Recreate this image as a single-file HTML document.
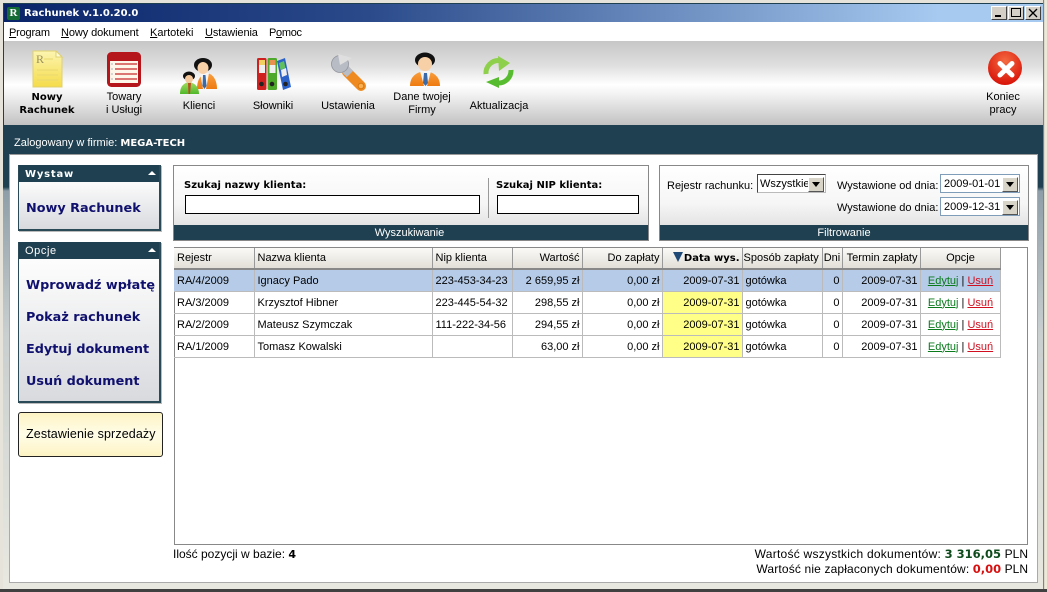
<!DOCTYPE html>
<html><head><meta charset="utf-8"><style>
html,body{margin:0;padding:0}
body{width:1047px;height:592px;position:relative;overflow:hidden;background:#e6e4da;font:11px "Liberation Sans",sans-serif;color:#000}
.a{position:absolute;white-space:nowrap}
.c{text-align:center;transform:translateX(-50%)}
.b{font-family:"DejaVu Sans",sans-serif;font-weight:bold}
.box{position:absolute;box-sizing:border-box}
.nav{position:absolute;left:26px;font:bold 12.8px "DejaVu Sans",sans-serif;color:#10106e;white-space:nowrap}
.inp{position:absolute;box-sizing:border-box;background:#fff;border:1px solid #000}
.combo{position:absolute;box-sizing:border-box;background:#fff;border:1px solid #7f9db9;height:19px;width:80px;font-size:11px;line-height:18px;padding-left:3px}
.arr{position:absolute;right:1px;top:2px;width:16px;height:15px;background:#d8d4c8;border:1px solid;border-color:#fff #555 #555 #fff;box-sizing:border-box}
.arr:after{content:"";position:absolute;left:3px;top:4px;border:4px solid transparent;border-top:5px solid #000;border-bottom:0}
table{position:absolute;left:174px;top:248px;border-collapse:collapse;table-layout:fixed;width:826px}
th{height:21px;padding:0 2px 0 3px;font-weight:normal;text-align:left;background:linear-gradient(#fbfaf7,#e2dfd8);border-right:1px solid #999;border-bottom:2px solid #888;white-space:nowrap;overflow:hidden;box-sizing:border-box}
td{height:22px;padding:1px 2px 0 3px;border-right:1px solid #bbb;border-bottom:1px solid #bbb;white-space:nowrap;overflow:hidden;box-sizing:border-box}
.r{text-align:right}
tr.s td{background:#b5cbe8}
td.y{background:#ffff88}
a{text-decoration:underline}
.g{color:#0a7a1c}.d{color:#d01020}
.ft{position:absolute;left:0;right:0;bottom:0;height:15px;background:#1f4050;color:#fff;text-align:center;line-height:16px}
.hd{position:absolute;left:0;right:0;top:0;height:17px;background:#1f4050;color:#fff}
.tri{position:absolute;right:3px;top:6px;border:4px solid transparent;border-bottom:4px solid #fff;border-top:0}
</style></head><body>
<!-- window frame -->
<div class="box" style="left:3px;top:3px;width:1040px;height:587px;background:linear-gradient(#1f4050 0,#1f4050 184px,#8e9ea8 188px,#c9cfcf 330px,#e8e8e0 580px)"></div>
<div class="box" style="left:1043px;top:0;width:4px;height:592px;background:linear-gradient(90deg,#555,#ece9d8 40%,#ece9d8)"></div>
<div class="box" style="left:0;top:589px;width:1047px;height:3px;background:#404040"></div>
<!-- title -->
<div class="box" style="left:4px;top:4px;width:1039px;height:18px;background:linear-gradient(90deg,#0a246a,#2a4a8a 35%,#a6caf0 90%)"></div>
<div class="box" style="left:7px;top:7px;width:13px;height:13px;background:#146b33;border-radius:2px;color:#fff;font:bold 11px 'Liberation Serif',serif;text-align:center;line-height:13px">R</div>
<div class="a b" style="left:24px;top:6px;color:#fff;font-size:10px;line-height:15px">Rachunek v.1.0.20.0</div>
<div class="box" style="left:991px;top:6px;width:16px;height:14px;background:#d4d0c8;border:1px solid;border-color:#fff #404040 #404040 #fff"><div class="box" style="left:3px;top:8px;width:6px;height:2px;background:#000"></div></div>
<div class="box" style="left:1008px;top:6px;width:16px;height:14px;background:#d4d0c8;border:1px solid;border-color:#fff #404040 #404040 #fff"><div class="box" style="left:2px;top:1px;width:10px;height:9px;border:1px solid #000"></div></div>
<div class="box" style="left:1025px;top:6px;width:16px;height:14px;background:#d4d0c8;border:1px solid;border-color:#fff #404040 #404040 #fff"><svg class="a" style="left:2px;top:1px" width="10" height="10"><path d="M1 1L9 9M9 1L1 9" stroke="#000" stroke-width="1.3"/></svg></div>
<!-- menu -->
<div class="box" style="left:4px;top:22px;width:1039px;height:19px;background:#fff"></div>
<div class="a" style="left:9px;top:26px;line-height:14px;letter-spacing:-.2px"><u>P</u>rogram</div>
<div class="a" style="left:61px;top:26px;line-height:14px;letter-spacing:-.1px"><u>N</u>owy dokument</div>
<div class="a" style="left:150px;top:26px;line-height:14px"><u>K</u>artoteki</div>
<div class="a" style="left:205px;top:26px;line-height:14px;letter-spacing:-.1px"><u>U</u>stawienia</div>
<div class="a" style="left:269px;top:26px;line-height:14px;letter-spacing:-.3px">P<u>o</u>moc</div>
<!-- toolbar -->
<div class="box" style="left:4px;top:41px;width:1039px;height:84px;background:linear-gradient(#c6c6c6,#e0e0e0 30%,#fff 52%,#f4f4f4 62%,#c2c2c2)"></div>
<svg class="a" style="left:0;top:41px" width="1047" height="60" viewBox="0 41 1047 60">
<defs>
<linearGradient id="n" x1="0" y1="0" x2="0" y2="1"><stop offset="0" stop-color="#fcf4b0"/><stop offset="1" stop-color="#f5dc4a"/></linearGradient>
<radialGradient id="x" cx=".5" cy=".3" r=".7"><stop offset="0" stop-color="#f46a40"/><stop offset="1" stop-color="#d81208"/></radialGradient>
<linearGradient id="o" x1="0" y1="0" x2="0" y2="1"><stop offset="0" stop-color="#f9a040"/><stop offset="1" stop-color="#ee7a10"/></linearGradient>
<linearGradient id="gr" x1="0" y1="0" x2="0" y2="1"><stop offset="0" stop-color="#a6dc60"/><stop offset="1" stop-color="#4fb82a"/></linearGradient>
</defs>
<!-- note -->
<path d="M33 51H56L62 57V87H33Z" fill="url(#n)" stroke="#e0d070"/>
<path d="M56 51V57H62Z" fill="#fffbe0" stroke="#e0d070"/>
<text x="36" y="63" font-family="Liberation Serif" font-size="12" fill="#9a9060">R</text>
<path d="M44 59H53M37 70H58M37 75H58M37 80H58" stroke="#e8d870"/>
<!-- book -->
<rect x="107" y="52" width="34" height="35" rx="4.500" fill="#b5161c"/>
<rect x="110" y="61" width="28" height="22" fill="#fff6ea"/>
<path d="M115 64H137M115 69H137M115 74H137M115 79H137" stroke="#c62a2a" stroke-width="1.300"/>
<path d="M111 64H113M111 69H113M111 74H113M111 79H113" stroke="#ccc" stroke-width="1.500"/>
<!-- clients -->
<path d="M197 89C197 78 202 74 207 73C213 74 217 80 217 89Z" fill="url(#o)"/>
<path d="M200 73L203 89H206L209 73Z" fill="#f4f4f4"/><path d="M203 75H205.500L206.500 86L204.500 89L202.500 86Z" fill="#3b6aa8"/>
<ellipse cx="203" cy="65" rx="9" ry="7" fill="#111"/>
<ellipse cx="203" cy="68" rx="5.500" ry="6" fill="#f8d0a8"/>
<path d="M180 94C180 86 184 83 189 82C195 83 199 87 199 94Z" fill="url(#gr)"/>
<path d="M188 83L188.500 94H190L191 83Z" fill="#b85020"/>
<ellipse cx="189" cy="76" rx="6" ry="4.500" fill="#111"/>
<ellipse cx="189" cy="79" rx="4" ry="4" fill="#f5c89c"/>
<!-- binders -->
<rect x="257" y="58" width="9.500" height="32" rx="1.500" fill="#cf2020"/><rect x="259" y="60" width="6" height="5" fill="#f0d060"/><rect x="259" y="65" width="6" height="8" fill="#eee"/><circle cx="261.500" cy="84" r="2.300" fill="#222"/>
<rect x="267.500" y="58" width="9.500" height="32" rx="1.500" fill="#4ea82c"/><rect x="269.500" y="60" width="6" height="5" fill="#e89050"/><rect x="269.500" y="65" width="6" height="8" fill="#eee"/><circle cx="272" cy="84" r="2.300" fill="#222"/>
<path d="M277 61L285 58L291 87L283 90Z" fill="#2a62c8"/><path d="M279 63L284 61L285.500 68L280.500 70Z" fill="#60c060"/><path d="M281 70L286 68L287 75L282 77Z" fill="#eee"/><circle cx="285.500" cy="84" r="2.300" fill="#222"/>
<!-- wrench -->
<path d="M347 72L361 86" stroke="#ee8a20" stroke-width="10" stroke-linecap="round"/>
<circle cx="361" cy="86" r="2.800" fill="#f9b050" stroke="#d67810"/>
<path d="M340 64L350 74" stroke="#b8bcc4" stroke-width="9"/>
<circle cx="340" cy="64" r="8.500" fill="#b8bcc4" stroke="#90949c" stroke-width=".8"/>
<path d="M340 65L338 54L352 58Z" fill="#dfdfdf"/>
<!-- person -->
<path d="M410 86C410 76 417 72 425 71C433 72 440 76 440 86Z" fill="url(#o)"/>
<path d="M420 71L424 86H427L431 71Z" fill="#f4f4f4"/><path d="M424 73H427L428 83L425.500 86L423 83Z" fill="#3b6aa8"/>
<ellipse cx="425" cy="60" rx="10" ry="7.500" fill="#111"/>
<ellipse cx="425" cy="64" rx="7" ry="7" fill="#f8d0a8"/>
<!-- refresh -->
<path d="M486 74A12.500 12.500 0 0 1 499 60.500" fill="none" stroke="#8ed04c" stroke-width="5"/>
<path d="M498 56L510 63L499 71Z" fill="#8ed04c"/>
<path d="M511 70A12.500 12.500 0 0 1 498 83" fill="none" stroke="#58bc30" stroke-width="5"/>
<path d="M499 77L486 82L499 88Z" fill="#58bc30"/>
<!-- close -->
<circle cx="1005" cy="68" r="17" fill="url(#x)"/>
<path d="M1000 63.500L1012 75M1012 63.500L1000 75" stroke="#fff" stroke-width="5" stroke-linecap="round"/>
</svg>
<div class="a c b" style="left:47px;top:91px;line-height:13px;font-size:10px">Nowy<br>Rachunek</div>
<div class="a c" style="left:124px;top:91px;line-height:13px">Towary<br>i Usługi</div>
<div class="a c" style="left:199px;top:100px;line-height:13px">Klienci</div>
<div class="a c" style="left:273px;top:100px;line-height:13px">Słowniki</div>
<div class="a c" style="left:348px;top:100px;line-height:13px">Ustawienia</div>
<div class="a c" style="left:422px;top:91px;line-height:13px">Dane twojej<br>Firmy</div>
<div class="a c" style="left:499px;top:100px;line-height:13px">Aktualizacja</div>
<div class="a c" style="left:1003px;top:91px;line-height:13px">Koniec<br>pracy</div>
<!-- logged -->
<div class="a" style="left:14px;top:136px;color:#fff;line-height:14px">Zalogowany w firmie: <span class="b" style="font-size:10px">MEGA-TECH</span></div>
<!-- content panel -->
<div class="box" style="left:9px;top:154px;width:1029px;height:429px;background:#fff;border:1px solid #aaa;border-top-color:#999"></div>
<!-- left panels -->
<div class="box" style="left:18px;top:165px;width:143px;height:66px;background:linear-gradient(#fff,#fafafa 30%,#d8dade);border-right:2px solid #2a4a58;border-bottom:2px solid #2a4a58;border-left:1px solid #2a4a58;box-shadow:1px 1px 0 #bbb"><div class="hd"><span class="a b" style="left:6px;top:2px;font-size:10px;letter-spacing:.8px;line-height:15px">Wystaw</span><span class="tri"></span></div></div>
<div class="nav" style="top:201px">Nowy Rachunek</div>
<div class="box" style="left:18px;top:242px;width:143px;height:161px;background:linear-gradient(#fff,#fafafa 20%,#d8dade);border-right:2px solid #2a4a58;border-bottom:2px solid #2a4a58;border-left:1px solid #2a4a58;box-shadow:1px 1px 0 #bbb"><div class="hd"><span class="a" style="left:6px;top:3px;line-height:13px;letter-spacing:.6px">Opcje</span><span class="tri"></span></div></div>
<div class="nav" style="top:278px">Wprowadź wpłatę</div>
<div class="nav" style="top:310px">Pokaż rachunek</div>
<div class="nav" style="top:342px">Edytuj dokument</div>
<div class="nav" style="top:374px">Usuń dokument</div>
<div class="box" style="left:18px;top:412px;width:145px;height:45px;background:linear-gradient(#fdf3c4,#fffde8 50%,#fdf3c4);border:1px solid #222;border-radius:3px"></div>
<div class="a" style="left:26px;top:427px;font-size:12.500px;letter-spacing:.12px;line-height:15px">Zestawienie sprzedaży</div>
<!-- search panel -->
<div class="box" style="left:173px;top:165px;width:476px;height:76px;background:linear-gradient(#fff,#f6f6f6 50%,#d8d8d8);border:1px solid #888"><div class="ft" style="padding-right:3px">Wyszukiwanie</div></div>
<div class="a b" style="left:184px;top:179px;font-size:10px;line-height:14px">Szukaj nazwy klienta:</div>
<div class="inp" style="left:185px;top:195px;width:295px;height:19px"></div>
<div class="box" style="left:488px;top:178px;width:1px;height:40px;background:#999"></div>
<div class="a b" style="left:496px;top:179px;font-size:10px;line-height:14px">Szukaj NIP klienta:</div>
<div class="inp" style="left:497px;top:195px;width:142px;height:19px"></div>
<!-- filter panel -->
<div class="box" style="left:659px;top:165px;width:370px;height:76px;background:linear-gradient(#fff,#f6f6f6 50%,#d8d8d8);border:1px solid #888"><div class="ft">Filtrowanie</div></div>
<div class="a" style="left:667px;top:179px;line-height:14px">Rejestr rachunku:</div>
<div class="combo" style="left:757px;top:174px;width:69px;border-color:#444 #bbb #bbb #444;padding-left:2px;overflow:hidden">Wszystkie<span class="arr"></span></div>
<div class="a" style="left:837px;top:179px;line-height:14px">Wystawione od dnia:</div>
<div class="combo" style="left:940px;top:174px">2009-01-01<span class="arr"></span></div>
<div class="a" style="left:837px;top:201px;line-height:14px">Wystawione do dnia:</div>
<div class="combo" style="left:940px;top:197px">2009-12-31<span class="arr"></span></div>
<!-- grid -->
<div class="box" style="left:174px;top:247px;width:854px;height:298px;background:#fff;border:1px solid #888"></div>
<table><colgroup><col style="width:80px"><col style="width:178px"><col style="width:80px"><col style="width:70px"><col style="width:80px"><col style="width:80px"><col style="width:80px"><col style="width:20px"><col style="width:78px"><col style="width:80px"></colgroup>
<tr><th>Rejestr</th><th>Nazwa klienta</th><th>Nip klienta</th><th class="r">Wartość</th><th class="r">Do zapłaty</th><th class="r b" style="font-size:10px;padding:0 2px 0 0"><span style="display:inline-block;border:5px solid transparent;border-top:10px solid #1f4a78;border-bottom:0;margin-right:1px;vertical-align:-1px"></span>Data wys.</th><th style="padding:0 1px">Sposób zapłaty</th><th style="text-align:center;padding:0">Dni</th><th class="r">Termin zapłaty</th><th style="text-align:center">Opcje</th></tr>
<tr class="s"><td>RA/4/2009</td><td>Ignacy Pado</td><td>223-453-34-23</td><td class="r">2 659,95 zł</td><td class="r">0,00 zł</td><td class="r">2009-07-31</td><td>gotówka</td><td class="r">0</td><td class="r">2009-07-31</td><td style="text-align:center"><a class="g">Edytuj</a> | <a class="d">Usuń</a></td></tr>
<tr><td>RA/3/2009</td><td>Krzysztof Hibner</td><td>223-445-54-32</td><td class="r">298,55 zł</td><td class="r">0,00 zł</td><td class="r y">2009-07-31</td><td>gotówka</td><td class="r">0</td><td class="r">2009-07-31</td><td style="text-align:center"><a class="g">Edytuj</a> | <a class="d">Usuń</a></td></tr>
<tr><td>RA/2/2009</td><td>Mateusz Szymczak</td><td>111-222-34-56</td><td class="r">294,55 zł</td><td class="r">0,00 zł</td><td class="r y">2009-07-31</td><td>gotówka</td><td class="r">0</td><td class="r">2009-07-31</td><td style="text-align:center"><a class="g">Edytuj</a> | <a class="d">Usuń</a></td></tr>
<tr><td>RA/1/2009</td><td>Tomasz Kowalski</td><td></td><td class="r">63,00 zł</td><td class="r">0,00 zł</td><td class="r y">2009-07-31</td><td>gotówka</td><td class="r">0</td><td class="r">2009-07-31</td><td style="text-align:center"><a class="g">Edytuj</a> | <a class="d">Usuń</a></td></tr>
</table>
<!-- footer -->
<div class="a" style="left:173px;top:547px;font-size:12px;line-height:14px">Ilość pozycji w bazie: <span class="b" style="font-size:11px">4</span></div>
<div class="a" style="right:19px;top:547px;font-size:12px;line-height:14px;letter-spacing:.25px">Wartość wszystkich dokumentów: <span class="b" style="font-size:11.500px;letter-spacing:0;color:#0e4a1c">3 316,05</span> <span style="letter-spacing:0">PLN</span></div>
<div class="a" style="right:19px;top:562px;font-size:12px;line-height:14px;letter-spacing:.15px">Wartość nie zapłaconych dokumentów: <span class="b" style="font-size:11.500px;letter-spacing:0;color:#d81010">0,00</span> <span style="letter-spacing:0">PLN</span></div>
</body></html>
